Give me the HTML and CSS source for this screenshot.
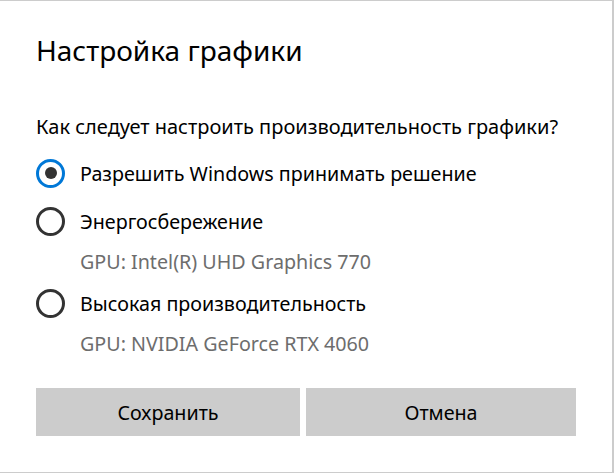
FILE: index.html
```html
<!DOCTYPE html>
<html lang="ru">
<head>
<meta charset="utf-8">
<title>Настройка графики</title>
<link rel="stylesheet" href="styles.css">
</head>
<body>
<div class="dialog">
  <h1 class="title">Настройка графики</h1>
  <p class="question">Как следует настроить производительность графики?</p>
  <div class="options">
    <div class="option"><span class="radio checked"></span><span class="label">Разрешить Windows принимать решение</span></div>
    <div class="option"><span class="radio"></span><span class="label">Энергосбережение</span></div>
    <div class="sub">GPU: Intel(R) UHD Graphics 770</div>
    <div class="option"><span class="radio"></span><span class="label">Высокая производительность</span></div>
    <div class="sub">GPU: NVIDIA GeForce RTX 4060</div>
  </div>
  <div class="buttons">
    <button class="btn">Сохранить</button>
    <button class="btn">Отмена</button>
  </div>
</div>
</body>
</html>
```
FILE: styles.css
```css
html, body {
  margin: 0;
  padding: 0;
  background: #ffffff;
}
body {
  font-family: "Noto Sans", "Open Sans", sans-serif;
  color: #000;
}
.dialog {
  box-sizing: border-box;
  width: 614px;
  height: 473px;
  border-top: 1px solid #cccccc;
  border-right: 2px solid #cccccc;
  border-bottom: 1px solid #cccccc;
  padding: 0 0 0 36px;
  display: flex;
  flex-direction: column;
}
.title {
  margin: 29px 0 0 0;
  font-size: 28px;
  font-weight: 400;
  line-height: 40px;
  height: 40px;
}
.question {
  margin: 43px 0 0 0;
  font-size: 20px;
  line-height: 28px;
}
.options {
  margin-top: 8px;
  display: flex;
  flex-direction: column;
}
.option {
  height: 48px;
  display: flex;
  align-items: center;
  gap: 15px;
  font-size: 19.7px;
}
.radio {
  box-sizing: border-box;
  width: 29px;
  height: 29px;
  border: 3px solid #333333;
  border-radius: 50%;
  display: flex;
  align-items: center;
  justify-content: center;
  flex: none;
}
.radio.checked {
  border-color: #0078d7;
}
.radio.checked::after {
  content: "";
  width: 12px;
  height: 12px;
  border-radius: 50%;
  background: #333333;
}
.sub {
  height: 34px;
  line-height: 34px;
  padding-left: 44px;
  font-size: 19.7px;
  color: #6d6d6d;
}
.buttons {
  margin-top: 27px;
  display: grid;
  grid-template-columns: 264px 270px;
  column-gap: 6px;
}
.btn {
  height: 48px;
  border: none;
  background: #cccccc;
  font-family: "Noto Sans", "Open Sans", sans-serif;
  font-size: 19.7px;
  color: #000;
  padding: 0;
}
```
